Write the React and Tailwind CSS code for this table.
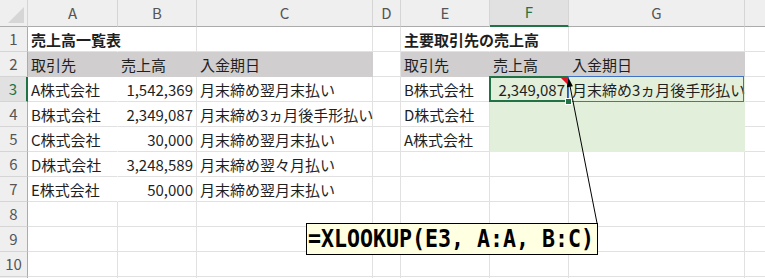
import React from "react";

const COLS = ["A", "B", "C", "D", "E", "F", "G", "H"];

const GRAY = "gray";
const GREEN = "green";

// Sheet contents keyed by "row-col"
const cells = {
  "1-A": { text: "売上高一覧表", bold: true, noRight: true },
  "1-E": { text: "主要取引先の売上高", bold: true, noRight: true },

  "2-A": { text: "取引先", fill: GRAY },
  "2-B": { text: "売上高", fill: GRAY },
  "2-C": { text: "入金期日", fill: GRAY },
  "2-E": { text: "取引先", fill: GRAY },
  "2-F": { text: "売上高", fill: GRAY },
  "2-G": { text: "入金期日", fill: GRAY },

  "3-A": { text: "A株式会社", noRight: true },
  "3-B": { text: "1,542,369", right: true },
  "3-C": { text: "月末締め翌月末払い" },
  "3-E": { text: "B株式会社" },
  "3-F": { text: "2,349,087", right: true, fill: GREEN, active: true },
  "3-G": { text: "月末締め3ヵ月後手形払い", fill: GREEN, spill: true },

  "4-A": { text: "B株式会社", noRight: true },
  "4-B": { text: "2,349,087", right: true },
  "4-C": { text: "月末締め3ヵ月後手形払い" },
  "4-E": { text: "D株式会社" },
  "4-F": { fill: GREEN },
  "4-G": { fill: GREEN },

  "5-A": { text: "C株式会社", noRight: true },
  "5-B": { text: "30,000", right: true },
  "5-C": { text: "月末締め翌月末払い" },
  "5-E": { text: "A株式会社" },
  "5-F": { fill: GREEN },
  "5-G": { fill: GREEN },

  "6-A": { text: "D株式会社", noRight: true },
  "6-B": { text: "3,248,589", right: true },
  "6-C": { text: "月末締め翌々月払い" },

  "7-A": { text: "E株式会社", noRight: true },
  "7-B": { text: "50,000", right: true },
  "7-C": { text: "月末締め翌月末払い" },
};

const fillClass = {
  [GRAY]: "bg-[#d0cece] border-[#d0cece]",
  [GREEN]: "bg-[#e2efda] border-[#e2efda]",
};

function Cell({ row, col }) {
  const c = cells[`${row}-${col}`] || {};
  const base =
    "relative flex items-center whitespace-nowrap border-r border-b px-[3px] text-[15px] leading-none text-[#1f1f1f]";
  const border = c.fill ? fillClass[c.fill] : "border-[#e1e1e1]";
  const right = c.noRight ? "border-r-transparent" : "";
  const align = c.right ? "justify-end" : "justify-start";
  const weight = c.bold ? "font-bold" : "font-normal";
  return (
    <div className={`${base} ${border} ${right} ${align} ${weight}`}>
      {c.text && <span className="relative z-10">{c.text}</span>}
      {c.active && (
        <>
          <div className="absolute -left-[1px] -top-[1px] -right-[1px] -bottom-[1px] z-20 border-2 border-[#217346]" />
          <div className="absolute -right-[4px] -bottom-[4px] z-30 h-[7px] w-[7px] border border-white bg-[#217346]" />
          <svg className="absolute right-[1px] top-[1px] z-30" width="6" height="6" viewBox="0 0 6 6">
            <polygon points="0,0 6,0 6,6" fill="#e81123" />
          </svg>
        </>
      )}
      {c.spill && (
        <div className="absolute -left-[1px] -top-[1px] right-0 -bottom-[1px] z-20 border border-[#3f72c4]" />
      )}
    </div>
  );
}

function ColumnHeader({ letter, label }) {
  const selected = letter === "F";
  return (
    <div
      className={`flex items-center justify-center border-r border-r-[#d5d5d5] text-[15px] ${
        selected
          ? "border-b-2 border-b-[#217346] bg-[#e1e1e1] text-[#217346]"
          : "border-b border-b-[#ababab] bg-[#efefef] text-[#555555]"
      }`}
    >
      {label}
    </div>
  );
}

function RowHeader({ n, label }) {
  const selected = n === 3;
  return (
    <div
      className={`flex items-center justify-center border-b border-b-[#d5d5d5] text-[15px] ${
        selected
          ? "border-r-2 border-r-[#217346] bg-[#e1e1e1] text-[#217346]"
          : "border-r border-r-[#ababab] bg-[#efefef] text-[#555555]"
      }`}
    >
      {label}
    </div>
  );
}

export default function App() {
  const rows = Array.from({ length: 11 }, (_, i) => i + 1);
  return (
    <div
      className="relative h-[278px] w-[765px] overflow-hidden bg-white"
      style={{ fontFamily: '"Noto Sans CJK JP", "Noto Sans", sans-serif' }}
    >
      <div className="grid w-[834px] grid-cols-[28px_90px_79px_176px_28px_89px_79px_176px_89px] grid-rows-[27px_repeat(11,25px)]">
        {/* corner select-all */}
        <div className="relative border-r border-b border-r-[#d5d5d5] border-b-[#ababab] bg-[#efefef]">
          <svg className="absolute bottom-[3px] right-[3px]" width="16" height="16" viewBox="0 0 16 16">
            <polygon points="0,16 16,16 16,0" fill="#d6d6d6" />
          </svg>
        </div>
        {COLS.map((l) => (
          <ColumnHeader key={l} letter={l} label={l === "H" ? "" : l} />
        ))}

        {rows.map((r) => (
          <React.Fragment key={r}>
            <RowHeader n={r} label={r <= 10 ? r : ""} />
            {COLS.map((col) => (
              <Cell key={col} row={r} col={col} />
            ))}
          </React.Fragment>
        ))}
      </div>

      {/* callout arrow from the formula note to F3 */}
      <svg className="pointer-events-none absolute left-0 top-0 z-40" width="765" height="278" viewBox="0 0 765 278">
        <line x1="597" y1="223" x2="569.6" y2="84" stroke="#000" strokeWidth="1" />
        <polygon points="568.5,78 572.9,86.3 566.9,87.3" fill="#000" />
      </svg>

      {/* formula note */}
      <div className="absolute left-[306px] top-[223px] z-50 flex h-[32px] w-[292px] items-center overflow-hidden border border-black bg-[#ffffe1] pl-[1px]">
        <span
          className="inline-block origin-center scale-y-[1.15] whitespace-pre text-[21.6px] font-bold leading-none text-black"
          style={{ fontFamily: '"DejaVu Sans Mono", "Liberation Mono", monospace' }}
        >
          =XLOOKUP(E3, A:A, B:C)
        </span>
      </div>
    </div>
  );
}
